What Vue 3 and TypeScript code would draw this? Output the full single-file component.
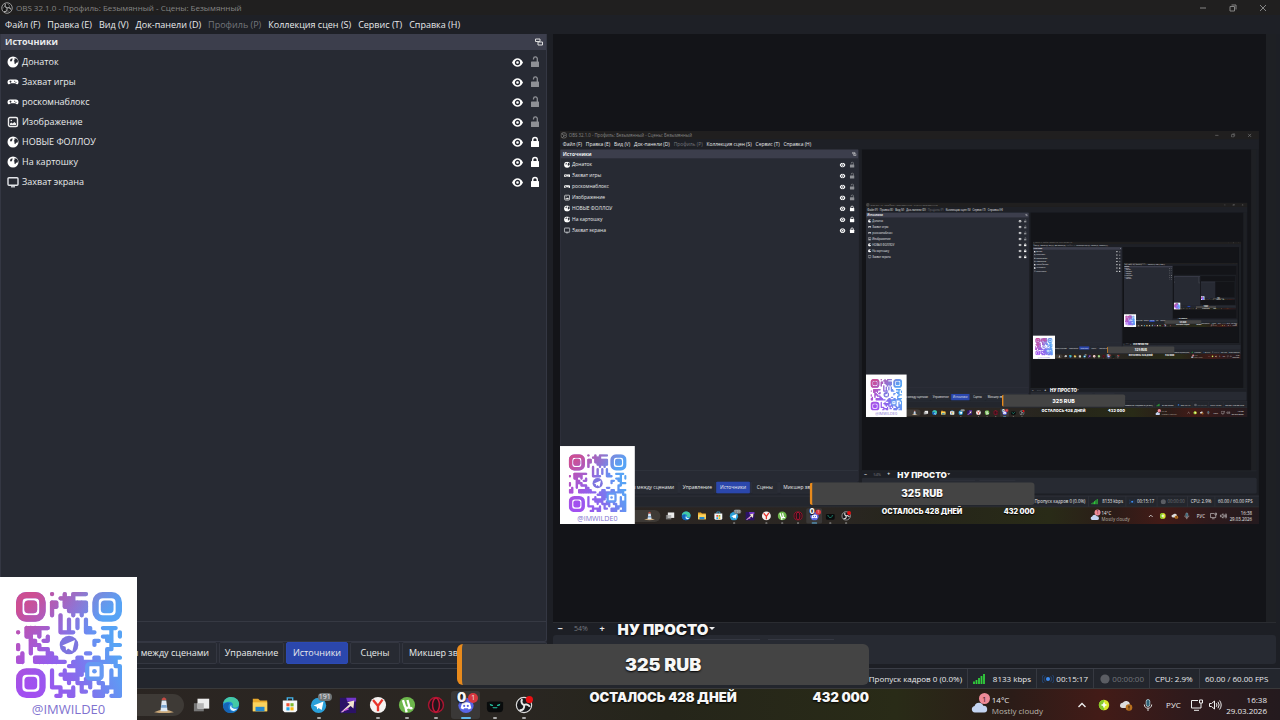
<script setup lang="ts">
import { computed } from 'vue'

defineOptions({ name: 'App' })

const props = withDefaults(defineProps<{ depth?: number }>(), { depth: 0 })
const maxDepth = 6

interface Source {
  name: string
  kind: 'browser' | 'game' | 'image' | 'display'
  locked: boolean
}

const menus = [
  { label: 'Файл (F)', off: false },
  { label: 'Правка (E)', off: false },
  { label: 'Вид (V)', off: false },
  { label: 'Док-панели (D)', off: false },
  { label: 'Профиль (P)', off: true },
  { label: 'Коллекция сцен (S)', off: false },
  { label: 'Сервис (T)', off: false },
  { label: 'Справка (H)', off: false },
]

const sources: Source[] = [
  { name: 'Донаток', kind: 'browser', locked: false },
  { name: 'Захват игры', kind: 'game', locked: false },
  { name: 'роскомнаблокс', kind: 'game', locked: false },
  { name: 'Изображение', kind: 'image', locked: false },
  { name: 'НОВЫЕ ФОЛЛОУ', kind: 'browser', locked: true },
  { name: 'На картошку', kind: 'browser', locked: true },
  { name: 'Захват экрана', kind: 'display', locked: true },
]

const tabs = [
  { id: 'transitions', label: 'Переходы между сценами' },
  { id: 'controls', label: 'Управление' },
  { id: 'sources', label: 'Источники' },
  { id: 'scenes', label: 'Сцены' },
  { id: 'mixer', label: 'Микшер звука' },
]

const qrRows = [
  '........#..#.####........',
  '..........####...........',
  '........##.######........',
  '........##.######........',
  '........#...#####........',
  '........#.#..#.#.........',
  '..........#.#.#.#........',
  '..........#.#.#.#........',
  '..######..#.#.#.##..####.',
  '#.####....####..###...#.#',
  '..##.#.#............###.#',
  '...##.##..........##.##..',
  '#..###............#...###',
  '#..#.###.............##..',
  '.#.#...##.......##...#...',
  '##..######....##..##.####',
  '##..########.###########.',
  '............#####..#...##',
  '........#..#..###..#..#.#',
  '........#.######...#..#.#',
  '........#..####.####..###',
  '........#...#.####.##.###',
  '........###..#.#.#..#####',
  '..........####.##.####.##',
  '.........##.##....###.###',
]

const qrPath = computed(() => {
  const on = (x: number, y: number) => qrRows[y]?.[x] === '#'
  let d = ''
  qrRows.forEach((row, y) => {
    for (let x = 0; x < row.length; x++) {
      if (!on(x, y)) continue
      const cx = x + 0.5
      const cy = y + 0.5
      d += `M${cx} ${cy}h0.01`
      if (on(x + 1, y)) d += `M${cx} ${cy}h1`
      if (on(x, y + 1)) d += `M${cx} ${cy}v1`
      if (on(x + 1, y) && on(x, y + 1) && on(x + 1, y + 1)) d += `M${cx} ${cy}l1 1`
    }
  })
  return d
})
</script>

<template>
  <div class="screen" :class="{ nested: props.depth > 0 }">
    <header class="titlebar">
      <svg class="logo" viewBox="0 0 24 24" aria-hidden="true">
        <circle cx="12" cy="12" r="10.5" fill="#111" stroke="#aaa" stroke-width="1.8" />
        <path d="M9 3.500c-2 4 0 7 3 8.500M20 15c-2-4-6-4-8-3M6 19c4 1 7-2 6-7" fill="none" stroke="#aaa" stroke-width="2.200" />
        <path d="M13 4c3 1 5 4 3 7M17 18c-3 1-6 0-7-3M4 13c0-3 3-5 6-4" fill="none" stroke="#888" stroke-width="1.500" />
      </svg>
      <span class="title">OBS 32.1.0 - Профиль: Безымянный - Сцены: Безымянный</span>
      <button class="win" aria-label="Свернуть"><svg viewBox="0 0 8 8"><path d="M1 4h6" /></svg></button>
      <button class="win" aria-label="Восстановить"><svg viewBox="0 0 8 8"><path d="M1 2.500h4.500v4.500H1zM2.500 1H7v4.500" /></svg></button>
      <button class="win" aria-label="Закрыть"><svg viewBox="0 0 8 8"><path d="M1 1l6 6M7 1L1 7" /></svg></button>
    </header>

    <nav class="menubar">
      <button v-for="m in menus" :key="m.label" :disabled="m.off">{{ m.label }}</button>
    </nav>

    <main class="work">
      <section class="left">
        <div class="dock">
          <div class="dock-head">
            <h2>Источники</h2>
            <button aria-label="Открепить">
              <svg viewBox="0 0 8 8"><path d="M.5 1h4.500v2.500H.5zM3 4h4.500v3H3z" fill="#3c3e4c" stroke="#ddd" /></svg>
            </button>
          </div>
          <ul class="sources">
            <li v-for="s in sources" :key="s.name">
              <svg v-if="s.kind === 'browser'" class="kind" viewBox="0 0 12 12">
                <circle cx="6" cy="6" r="5.500" fill="#fff" />
                <path d="M5.500 2.200L3.600 2.900 3 4.600l.6 1 1.100-.3.600-1.200z" fill="#272a33" />
                <path d="M7.400 2.200l2.600.6 1 2-.4 1.800-1.500.1-.8 1.600-1-1 .3-1.500-1-.9 1-1z" fill="#272a33" />
              </svg>
              <svg v-else-if="s.kind === 'game'" class="kind" viewBox="0 0 12 12">
                <path d="M3.500 3.500h5A2.500 2.500 0 0 1 11.500 6c0 2.800-2 2.800-3.200 1.200H3.700C2.500 8.800.5 8.800.5 6a2.500 2.500 0 0 1 3-2.500z" fill="#fff" />
                <path d="M2.500 5.700h2M3.500 4.700v2M7.200 5.300h1M8.500 6.400h1" stroke="#272a33" stroke-width=".9" />
              </svg>
              <svg v-else-if="s.kind === 'image'" class="kind" viewBox="0 0 12 12">
                <rect x="1.500" y="1.500" width="9" height="9" rx="1.500" fill="none" stroke="#eee" stroke-width="1.400" />
                <path d="M3 9V7.500l1.500-1 1 1L7.500 6 9 7.500V9z" fill="#eee" />
                <circle cx="4.300" cy="4.500" r=".8" fill="#eee" />
              </svg>
              <svg v-else class="kind" viewBox="0 0 12 12">
                <rect x="1" y="1.700" width="10" height="7.600" rx="1" fill="none" stroke="#e4e6ea" stroke-width="1.400" />
                <path d="M4 10.800h4" stroke="#e4e6ea" stroke-width="1.200" />
              </svg>
              <span class="name">{{ s.name }}</span>
              <button class="eye" aria-label="Видимость">
                <svg viewBox="0 0 10 8">
                  <path d="M0 4C1.500 1.200 3 .2 5 .2S8.500 1.200 10 4C8.500 6.800 7 7.800 5 7.800S1.500 6.800 0 4z" fill="#fff" />
                  <circle cx="5" cy="4" r="1.800" fill="#fff" stroke="#272a33" stroke-width="1.200" />
                </svg>
              </button>
              <button class="lock" :aria-label="s.locked ? 'Разблокировать' : 'Заблокировать'">
                <svg v-if="s.locked" viewBox="0 0 10 12">
                  <rect x="1" y="5" width="8" height="6" rx=".6" fill="#fff" />
                  <path d="M2.700 5.500V3.800a2.300 2.300 0 0 1 4.600 0v1.700" fill="none" stroke="#fff" stroke-width="1.400" />
                </svg>
                <svg v-else viewBox="0 0 10 12">
                  <rect x="1" y="5.500" width="8" height="5.500" rx=".6" fill="#8e9095" />
                  <path d="M7.300 6V3a1.900 1.900 0 0 0-3.800-.3v.8" fill="none" stroke="#8e9095" stroke-width="1.300" />
                </svg>
              </button>
            </li>
          </ul>
          <div class="dock-tools"></div>
        </div>
        <div class="tabs" role="tablist">
          <button
            v-for="t in tabs"
            :key="t.id"
            role="tab"
            :aria-selected="t.id === 'sources'"
            :class="['tab-' + t.id, { active: t.id === 'sources' }]"
          >{{ t.label }}</button>
        </div>
      </section>

      <section class="right">
        <div class="preview-row">
          <div class="preview">
            <div class="mirror">
              <div v-if="props.depth < maxDepth" class="mirror-screen" inert>
                <App :depth="props.depth + 1" />
              </div>
            </div>
          </div>
          <div class="track"></div>
        </div>
        <div class="zoombar">
          <button aria-label="Уменьшить">−</button>
          <output>54%</output>
          <button aria-label="Увеличить">+</button>
          <i class="caret"></i>
        </div>
        <div class="panel"><i></i><i></i></div>
      </section>
    </main>

    <footer class="status">
      <span class="drop">Пропуск кадров 0 (0.0%)</span>
      <span class="rate">
        <svg viewBox="0 0 12 10"><path d="M1 10V7.500M3.500 10V6M6 10V4M8.500 10V2M11 10V0" stroke="#31d13c" stroke-width="1.800" /></svg>
        8133 kbps
      </span>
      <span class="live">
        <svg viewBox="0 0 12 10">
          <circle cx="6" cy="5" r="2" fill="#3d8cf0" />
          <path d="M3.300 2.300a4 4 0 0 0 0 5.400M8.700 2.300a4 4 0 0 1 0 5.400M1.500 1a6 6 0 0 0 0 8M10.500 1a6 6 0 0 1 0 8" fill="none" stroke="#24487a" />
        </svg>
        00:15:17
      </span>
      <span class="rec"><svg viewBox="0 0 10 10"><circle cx="5" cy="5" r="4.600" fill="#5b5d63" /></svg>00:00:00</span>
      <span class="cpu">CPU: 2.9%</span>
      <span class="fps">60.00 / 60.00 FPS</span>
    </footer>

    <div class="taskbar">
      <button class="search" aria-label="Поиск">
        <svg viewBox="0 0 24 20">
          <path d="M1 18q6-3 11-3t11 3q-11 2-22 0z" fill="#c9a778" />
          <path d="M9.500 5h5l1.500 12H8z" fill="#dfe8f2" />
          <path d="M9 10h6l.4 3H8.600z" fill="#7ea6cf" />
          <path d="M9.500 4.500V3L12 1.500 14.500 3v1.500z" fill="#c44b45" />
        </svg>
      </button>
      <div class="apps">
        <button aria-label="Представление задач">
          <svg viewBox="0 0 20 20"><rect x="1" y="8" width="11" height="9" fill="#777" /><rect x="5" y="3" width="13" height="11" fill="#ececec" /><rect x="5" y="8" width="7" height="6" fill="#b5b5b5" /></svg>
        </button>
        <button aria-label="Edge">
          <svg viewBox="0 0 20 20">
            <circle cx="10" cy="10" r="9" fill="#1d86d8" />
            <path d="M1.300 8.500C2 3.500 6 1 10 1c5 0 9 3.500 9 7.500 0 3-2.300 4.500-4.700 4.500-2.200 0-3.300-1-2.500-2.200C12.800 9 11 6.500 7.800 6.500 4.800 6.500 2 8 1.300 8.500z" fill="#44c9a5" />
            <path d="M9 8c-3.500 3-2 8.500 3.500 9.500-3 2.500-11 1.500-11.300-7C3 7 7 6.500 9 8z" fill="#1664b5" />
            <path d="M10.500 10c-1 3 2.500 5 6.800 3.800-1.500 2-3.800 3-5.300 2.700-3.500-.8-4-5-1.500-6.500z" fill="#eaf6ff" />
          </svg>
        </button>
        <button aria-label="Проводник">
          <svg viewBox="0 0 20 20"><path d="M2 3h6l2 2h8v12H2z" fill="#e9a92d" /><path d="M2 7h16v10H2z" fill="#fbd35e" /><path d="M5 12h10v5H5z" fill="#2489cf" /></svg>
        </button>
        <button aria-label="Microsoft Store">
          <svg viewBox="0 0 20 20">
            <path d="M7 5V2h6v3" fill="none" stroke="#43b3ea" stroke-width="1.500" /><path d="M2 5h16v11l-2 2H4l-2-2z" fill="#f4f6f8" />
            <path d="M6 8h3.500v3.500H6z" fill="#ef5033" /><path d="M10.500 8H14v3.500h-3.500z" fill="#7eb82d" /><path d="M6 12.500h3.500V16H6z" fill="#1fa4e8" /><path d="M10.500 12.500H14V16h-3.500z" fill="#fbb713" />
          </svg>
        </button>
        <button class="run" aria-label="Telegram">
          <svg viewBox="0 0 20 20"><circle cx="9.500" cy="10.500" r="8.500" fill="#2aa0da" /><path d="M4 10.500L15 6l-2 9.500-3.500-2.300L8 15l-.5-3z" fill="#fff" /></svg>
          <b class="count">191</b>
        </button>
        <button aria-label="Игра">
          <svg viewBox="0 0 20 20"><rect x="1" y="2" width="18" height="17" fill="#2b1266" /><path d="M8 2h11v4H9z" fill="#7336c9" /><path d="M2 18L12 9 9 7l8-2-1 9-3-3-9 7z" fill="#f2e5d0" /><path d="M2 18l8-5 1 2z" fill="#c651dc" /></svg>
        </button>
        <button class="run" aria-label="Яндекс">
          <svg viewBox="0 0 20 20"><circle cx="10" cy="10" r="9" fill="#f6f3f2" /><path d="M4.500 4.500L10 11v6M10 11l5-7" fill="none" stroke="#e8352c" stroke-width="2.600" /></svg>
        </button>
        <button class="run" aria-label="uTorrent">
          <svg viewBox="0 0 20 20"><circle cx="10" cy="10" r="9" fill="#6db74c" /><path d="M5.500 4.500l2 6.500c1 3.500 5.500 2.500 4.700-.5L10.500 4.500M12 11c.5 2.500 2 3 4 2.300M8.500 13l1 5" fill="none" stroke="#fff" stroke-width="2.600" /></svg>
        </button>
        <button class="run" aria-label="Opera GX">
          <svg viewBox="0 0 20 20"><circle cx="10" cy="10" r="8.300" fill="#24141a" stroke="#a91531" stroke-width="1.600" /><ellipse cx="10" cy="10" rx="3.800" ry="7.700" fill="none" stroke="#c21838" stroke-width="1.600" /></svg>
        </button>
        <button class="run current" aria-label="Discord">
          <svg viewBox="0 0 20 20"><circle cx="10" cy="10.500" r="8.500" fill="#5865e6" /><path d="M5.500 8c3-1.500 6-1.500 9 0l1.500 5.500-3 1.500-1-1.500H8L7 15l-3-1.500z" fill="#fff" /><circle cx="8" cy="11" r="1.200" fill="#5865e6" /><circle cx="12" cy="11" r="1.200" fill="#5865e6" /></svg>
          <b class="badge">1</b>
        </button>
        <button class="run" aria-label="Утилита">
          <svg viewBox="0 0 20 20"><path d="M1 7l3-1h12l3 1v7q0 4-4 4H5q-4 0-4-4z" fill="#090b0c" /><path d="M4 8.500l4 1.500-.5 1.200L5 10.800zM16 8.500L12 10l.5 1.200 2.500-.4zM7 12.500h6l-1 1H8z" fill="#27c9a6" /></svg>
        </button>
        <button class="run" aria-label="OBS Studio">
          <svg viewBox="0 0 20 20">
            <circle cx="10" cy="10" r="8.500" fill="#17171a" stroke="#ddd" stroke-width="1.300" />
            <path d="M8 3.500c-2 3 0 6 2 6.500M16.500 12c-2-3-5-3-6.500-2M5 15.500c4 1 6-2 5-5.500" fill="none" stroke="#e6e6e6" stroke-width="2.200" />
            <circle cx="16" cy="4" r="4" fill="#e80f12" />
          </svg>
        </button>
      </div>
      <button class="weather">
        <span class="cloud">
          <svg viewBox="0 0 20 14"><path d="M4.500 13a4 4 0 0 1-.3-7.900A5.500 5.500 0 0 1 14.500 5a4 4 0 0 1 1 8z" fill="#c4d4f1" /></svg>
          <b>1</b>
        </span>
        <span class="wtext"><em>14°C</em><em>Mostly cloudy</em></span>
      </button>
      <div class="tray">
        <button aria-label="Скрытые значки"><svg viewBox="0 0 14 14"><path d="M3.500 9L7 5.500 10.500 9" fill="none" stroke="#eee" stroke-width="1.400" /></svg></button>
        <button aria-label="Защита"><svg viewBox="0 0 14 14"><circle cx="7" cy="7" r="5.200" fill="#d8e62a" /><path d="M7 1.800A5.200 5.200 0 0 0 7 12.200" fill="#86c92c" /><path d="M7 4.500v5M4.500 7h5" stroke="#fff" stroke-width="1.600" /></svg></button>
        <button aria-label="OneDrive"><svg viewBox="0 0 14 14"><path d="M3.500 10a2.600 2.600 0 0 1 .2-5.200 4 4 0 0 1 7.300 1.500L8 10z" fill="#ddd" /><circle cx="10" cy="9.500" r="3.300" fill="#b8701e" /><path d="M10 7.700v2.200M10 10.500v1" stroke="#2a1a10" /></svg></button>
        <button aria-label="Микрофон"><svg viewBox="0 0 14 14"><rect x="5.200" y="1.500" width="3.600" height="7" rx="1.800" fill="#2c5f73" stroke="#b8d4dd" stroke-width=".8" /><path d="M3.300 6.500c0 5 7.400 5 7.400 0M7 10.500V13" fill="none" stroke="#ddd" /></svg></button>
        <button class="lang">РУС</button>
        <button aria-label="Сеть"><svg viewBox="0 0 14 14"><path d="M8 2.500H1.500V10H11V8M4 12.300h5" fill="none" stroke="#eee" /><path d="M9.500 2h3v3h-3zM11 5v3" fill="none" stroke="#eee" /></svg></button>
        <button aria-label="Звук"><svg viewBox="0 0 14 14"><path d="M1.500 5.500h2L6.500 3v8l-3-2.500h-2zM8.300 5.200q1.300 1.800 0 3.600M10 3.800q2.300 3.200 0 6.400M11.600 2.500q3.200 4.500 0 9" fill="none" stroke="#eee" /></svg></button>
      </div>
      <button class="clock"><em>16:38</em><em>29.03.2026</em></button>
    </div>

    <div class="goal">
      <strong class="goal-title">НУ ПРОСТО</strong>
      <div class="goal-bar">325 RUB</div>
      <div class="goal-foot"><span>0</span><span>ОСТАЛОСЬ 428 ДНЕЙ</span><span>432 000</span></div>
    </div>

    <figure class="qr">
      <svg viewBox="0 0 25 25" role="img" aria-label="QR">
        <defs>
          <linearGradient id="qr-base" gradientUnits="userSpaceOnUse" x1="2" y1="18" x2="22" y2="10">
            <stop offset="0" stop-color="#a24ff0" /><stop offset=".45" stop-color="#8a68ec" /><stop offset="1" stop-color="#57a3f5" />
          </linearGradient>
          <linearGradient id="qr-pink" gradientUnits="userSpaceOnUse" x1="2" y1="3" x2="12" y2="14">
            <stop offset="0" stop-color="#cc4f93" /><stop offset="1" stop-color="#b060c0" stop-opacity="0" />
          </linearGradient>
        </defs>
        <g v-for="g in ['qr-base', 'qr-pink']" :key="g" :stroke="`url(#${g})`" fill="none">
          <path :d="qrPath" stroke-width="1" stroke-linecap="round" />
          <rect x=".75" y=".75" width="5.500" height="5.500" rx="1.700" stroke-width="1.500" />
          <rect x="18.750" y=".75" width="5.500" height="5.500" rx="1.700" stroke-width="1.500" />
          <rect x=".75" y="18.750" width="5.500" height="5.500" rx="1.700" stroke-width="1.500" />
          <g :fill="`url(#${g})`" stroke="none">
            <rect x="2" y="2" width="3" height="3" rx=".9" />
            <rect x="20" y="2" width="3" height="3" rx=".9" />
            <rect x="2" y="20" width="3" height="3" rx=".9" />
          </g>
        </g>
        <rect x="16.800" y="17" width="3.400" height="3.400" rx=".6" fill="#fff" stroke="#6699f3" stroke-width="1" />
        <circle cx="18.500" cy="18.700" r=".55" fill="#6699f3" />
        <circle cx="12.500" cy="12.500" r="2.200" fill="#7d74df" />
        <path d="M10.900 12.600l3-1.300-.6 2.700-1-.7-.5.500-.1-.9z" fill="#fff" />
      </svg>
      <figcaption>@IMWILDE0</figcaption>
    </figure>
  </div>
</template>

<style>
html,
body {
  margin: 0;
  background: #1d1f25;
}
</style>

<style scoped>
.screen {
  position: relative;
  display: grid;
  grid-template-rows: 15px 19px minmax(0, 1fr) 20px 32px;
  grid-template-columns: minmax(0, 1fr);
  width: 100%;
  height: 100vh;
  overflow: hidden;
  background: #1d1f25;
  color: #e9eaec;
  font: 9px/12px "Open Sans", "Noto Sans", sans-serif;
}
.screen.nested { height: 100%; }
.screen svg { display: block; }
button {
  margin: 0;
  padding: 0;
  border: 0;
  background: none;
  color: inherit;
  font: inherit;
}
em { font-style: normal; }

.titlebar { display: flex; align-items: center; padding-right: 2px; background: #201f1f; color: #858585; font-size: 8px; }
.logo { width: 12px; height: 12px; margin: 0 3px 0 1px; }
.title { flex: 1; white-space: nowrap; }
.win { width: 30px; display: flex; justify-content: center; }
.win svg { width: 8px; height: 8px; fill: none; stroke: #858585; stroke-width: 1; }

.menubar { display: flex; align-items: center; gap: 7px; padding-left: 5px; background: #1e2026; }
.menubar button { white-space: nowrap; }
.menubar button:disabled { color: #74767b; }

.work { display: flex; gap: 6px; min-height: 0; }
.left { flex: 0 0 547px; display: flex; flex-direction: column; min-width: 0; background: #22252d; padding-bottom: 4px; box-sizing: border-box; }
.dock { flex: 1; display: flex; flex-direction: column; box-sizing: border-box; border: 1px solid #343743; border-top: 0; border-radius: 0 0 3px 3px; background: #272a33; }
.dock-head { display: flex; align-items: center; justify-content: space-between; height: 16px; padding: 0 3px 0 4px; background: #3c3e4c; }
.dock-head h2 { margin: 0; font-size: 9px; font-weight: 700; }
.dock-head svg { width: 8px; height: 8px; }
.sources { flex: 1; margin: 0; padding: 2px 6px 0; list-style: none; }
.sources li { display: flex; align-items: center; height: 20px; }
.kind { width: 12px; height: 12px; margin-right: 3px; }
.name { flex: 1; }
.eye svg { width: 11px; height: 9px; }
.lock { margin-left: 7px; }
.lock svg { width: 10px; height: 12px; }
.dock-tools { height: 19px; border-top: 1px solid #363943; }

.tabs { display: flex; gap: 2px; height: 22px; overflow: hidden; background: #272a33; }
.tabs button { box-sizing: border-box; border: 1px solid #343741; border-radius: 2px; background: #272a32; white-space: nowrap; }
.tabs .tab-transitions { flex: 0 0 217px; padding-right: 7px; text-align: right; }
.tabs .tab-controls { flex: 0 0 65px; }
.tabs .tab-sources { flex: 0 0 62px; }
.tabs .tab-scenes { flex: 0 0 50px; }
.tabs .tab-mixer { flex: 1; padding: 0 6px; text-align: left; }
.tabs .active { border-color: #2c4ab4; background: #2b47ac; }

.right { flex: 1; display: flex; flex-direction: column; min-width: 0; padding-right: 4px; }
.preview-row { flex: 1; display: flex; min-height: 0; }
.preview { flex: 1; display: flex; align-items: center; min-width: 0; padding: 0 7px; background: #131418; overflow: hidden; }
.mirror { flex: 1; aspect-ratio: 16 / 9; min-width: 0; overflow: hidden; }
.mirror-screen { width: calc(100% / 0.546); height: calc(100% / 0.546); transform: scale(0.546); transform-origin: 0 0; }
.track { width: 10px; background: #1e2024; }
.zoombar { display: flex; align-items: center; height: 11px; border-top: 1px solid #2a2c31; margin-bottom: 1px; padding-left: 2px; }
.zoombar button { width: 10px; font-weight: 700; line-height: 11px; }
.zoombar output { width: 32px; color: #777a80; font-size: 7px; text-align: center; }
.caret { margin-left: 102px; border: 3px solid transparent; border-top-color: #eee; border-bottom: 0; }
.panel { display: flex; gap: 8px; height: 25px; margin-bottom: 4px; padding: 4px 0 0 141px; border-radius: 3px; background: #272a32; }
.panel i { width: 66px; border-top: 1px solid #353842; }

.status { display: flex; justify-content: flex-end; border-top: 1px solid #3a3d46; box-sizing: border-box; background: #23262d; font-size: 8px; }
.status span { display: flex; align-items: center; justify-content: space-between; box-sizing: border-box; padding: 0 5px; border-right: 1px solid #363941; white-space: nowrap; }
.status svg { width: 12px; height: 10px; }
.status .rate { width: 69px; }
.status .live { width: 57px; }
.status .rec { width: 56px; color: #74767c; }
.status .cpu { width: 50px; }
.status .fps { width: 80px; border: 0; }

.taskbar {
  display: flex;
  align-items: center;
  border-top: 1px solid #39393a;
  box-sizing: border-box;
  font-size: 8px;
  background: linear-gradient(90deg, #2b2522 0%, #2a2622 40%, #25251a 52%, #292b17 70%, #2b1c18 79%, #431b17 86%, #2e1a1c 93%, #241a1e 100%);
}
.search { display: flex; align-items: center; justify-content: flex-end; width: 184px; height: 22px; margin-right: 3px; padding-right: 8px; border-radius: 11px; background: #3e3a36; box-sizing: border-box; }
.search svg { width: 24px; height: 18px; }
.apps { display: flex; width: 352px; }
.apps button { position: relative; flex: 1; display: flex; align-items: center; justify-content: center; height: 28px; border-radius: 3px; }
.apps svg { width: 18px; height: 18px; }
.apps .current { background: #3a3837; }
.run::after { content: ""; position: absolute; left: 50%; bottom: 0; width: 4px; height: 2px; margin-left: -2px; border-radius: 1px; background: #aaa; }
.run.current::after { width: 10px; margin-left: -5px; background: #5fb7ea; }
.count, .badge { position: absolute; top: 2px; right: 2px; padding: 0 1px; border-radius: 4px; background: #6f7577; font-size: 7px; font-weight: 400; line-height: 8px; }
.badge { padding: 0 3px; border-radius: 5px; background: #d6373f; line-height: 10px; }

.weather { display: flex; align-items: center; gap: 4px; margin-left: auto; margin-right: 28px; text-align: left; }
.cloud { position: relative; padding-top: 6px; }
.cloud svg { width: 17px; height: 13px; }
.cloud b { position: absolute; top: -2px; right: -2px; width: 11px; height: 11px; border-radius: 50%; background: #ee8b98; color: #3a1519; font-size: 8px; font-weight: 400; line-height: 11px; text-align: center; }
.wtext em, .clock em { display: block; line-height: 11px; }
.wtext em + em { color: #b9b5a9; }
.tray { display: flex; align-items: center; }
.tray button { width: 22px; display: flex; justify-content: center; }
.tray svg { width: 14px; height: 14px; }
.tray .lang { width: 29px; }
.tray .lang ~ button { width: 18px; }
.clock { width: 43px; margin-right: 13px; text-align: right; }

.goal { position: absolute; left: 35.700%; bottom: 11px; width: 32.200%; color: #f7f7f7; font-family: Inter, "Open Sans", sans-serif; font-weight: 900; text-align: center; text-shadow: 0 1px 2px #000; }
.goal-title { display: block; font-size: 15px; line-height: 20px; font-weight: 900; margin-bottom: 4px; }
.goal-bar { height: 41px; padding-right: 5px; border-left: 5px solid #e88a1c; box-sizing: border-box; border-radius: 6px; background: #444; font-size: 18px; line-height: 41px; }
.goal-foot { display: grid; grid-template-columns: 1fr auto 1fr; font-size: 13px; line-height: 24px; white-space: nowrap; }
.goal-foot :first-child { text-align: left; }
.goal-foot :last-child { text-align: right; }

.qr { position: absolute; left: 0; bottom: 0; display: flex; flex-direction: column; align-items: center; box-sizing: border-box; width: 137px; height: 143px; margin: 0; padding-top: 15px; background: #fff; }
.qr svg { width: 106px; height: 106px; }
.qr figcaption { color: #8072cf; font-size: 13px; line-height: 22px; }
</style>
